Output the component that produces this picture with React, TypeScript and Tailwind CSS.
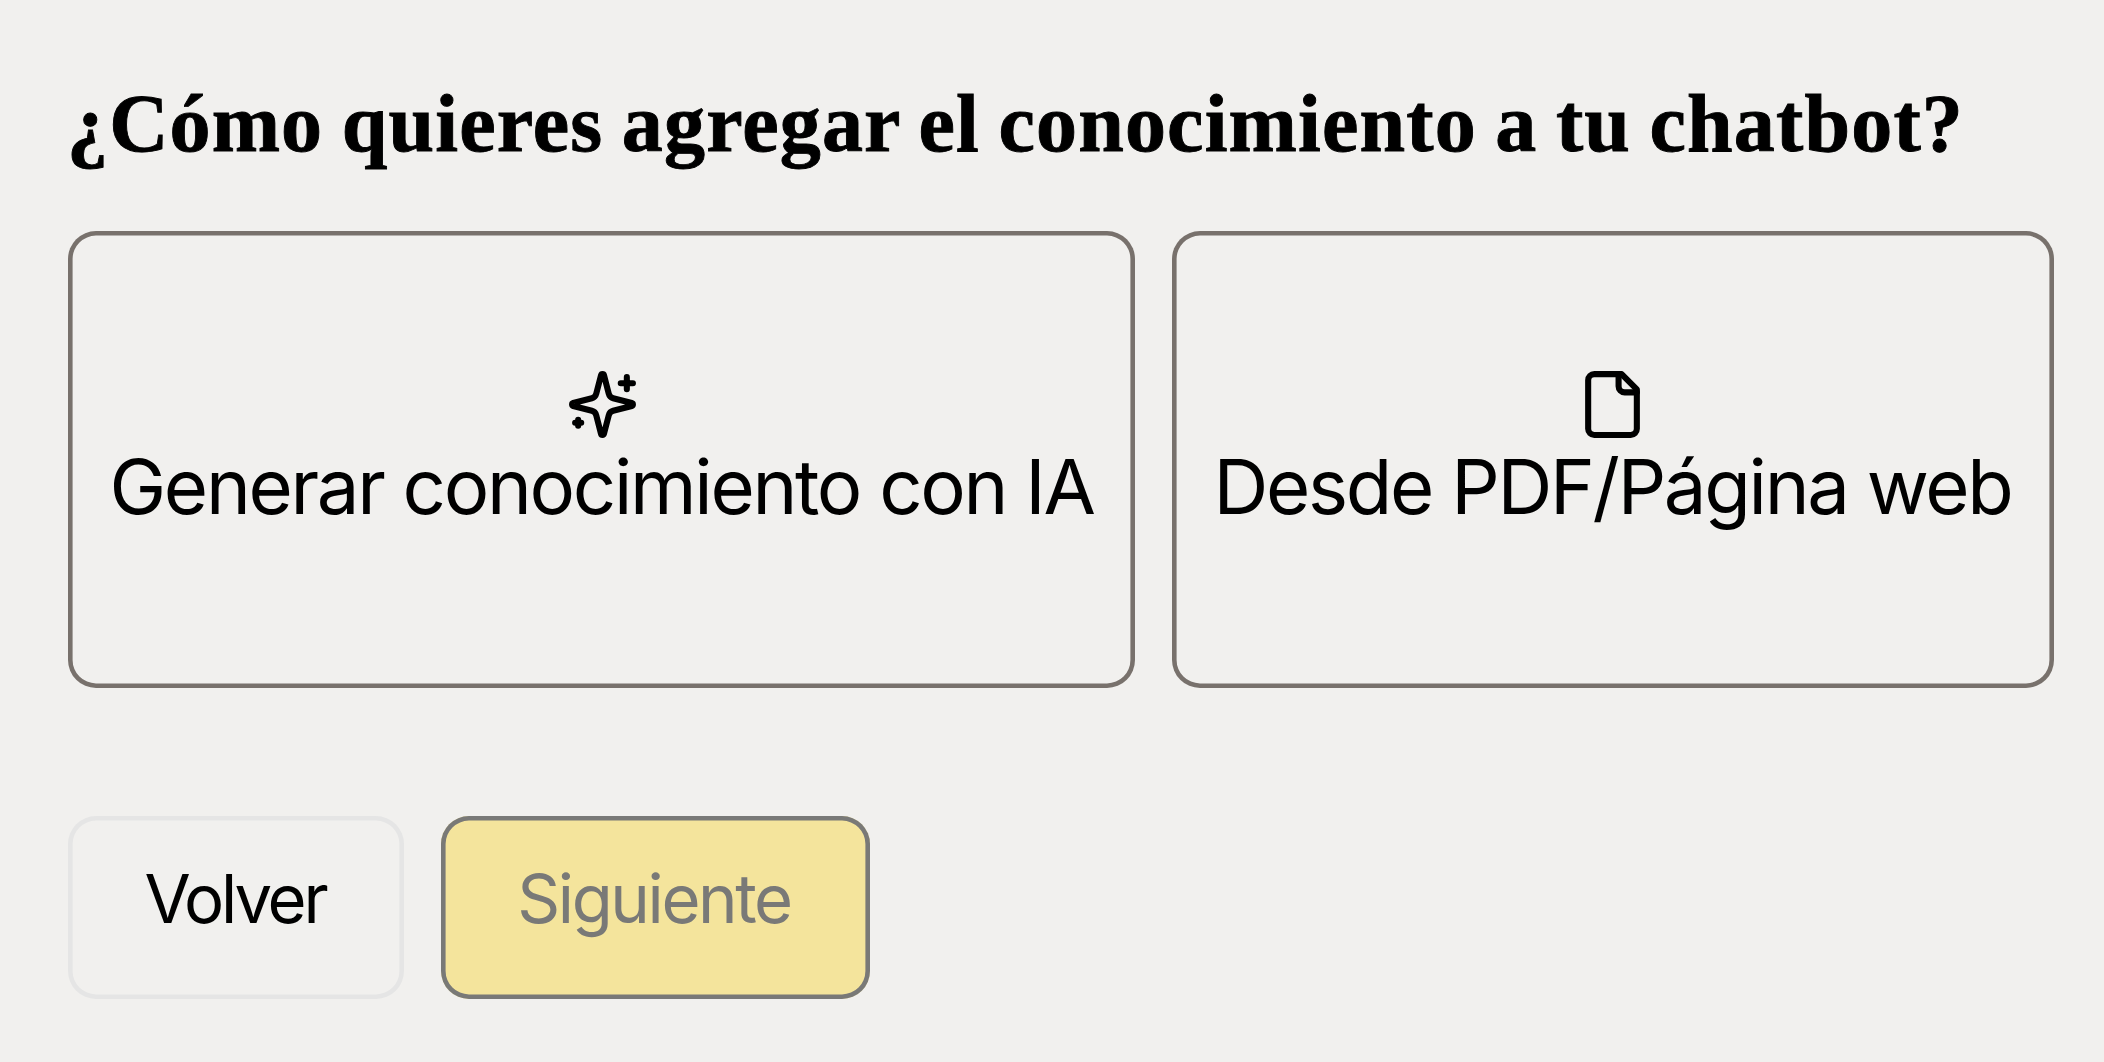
import React from "react";

function SparklesIcon() {
  return (
    <svg className="ml-[2px] size-[73px] shrink-0" viewBox="0 0 24 24" fill="none" stroke="currentColor" strokeWidth="2" strokeLinecap="round" strokeLinejoin="round">
      <path d="M9.937 15.5A2 2 0 0 0 8.5 14.063l-6.135-1.582a.5.5 0 0 1 0-.962L8.5 9.936A2 2 0 0 0 9.937 8.5l1.582-6.135a.5.5 0 0 1 .963 0L14.063 8.5A2 2 0 0 0 15.5 9.937l6.135 1.581a.5.5 0 0 1 0 .964L15.5 14.063a2 2 0 0 0-1.437 1.437l-1.582 6.135a.5.5 0 0 1-.963 0z" />
      <path d="M20 3v4M22 5h-4M4 17v2M5 18H3" />
    </svg>
  );
}

function FileIcon() {
  return (
    <svg className="mr-[2px] size-[73px] shrink-0" viewBox="0 0 24 24" fill="none" stroke="currentColor" strokeWidth="2" strokeLinecap="round" strokeLinejoin="round">
      <path d="M15 2H6a2 2 0 0 0-2 2v16a2 2 0 0 0 2 2h12a2 2 0 0 0 2-2V7Z" />
      <path d="M14 2v4a2 2 0 0 0 2 2h4" />
    </svg>
  );
}

export default function App() {
  return (
    <main className="h-[1062px] w-[2104px] overflow-hidden bg-[#f1f0ee] pl-[68px] pt-[76px] text-black">
      <h1 className="-ml-px h-[155px] whitespace-nowrap font-['Liberation_Serif',serif] text-[82px] font-bold leading-[96px] tracking-[1.15px] [word-spacing:-3.2px] [-webkit-text-stroke:0.9px_black]">
        ¿Cómo quieres agregar el conocimiento a tu chatbot?
      </h1>
      <div className="flex gap-[37px] whitespace-nowrap font-[Inter,sans-serif] text-[76px] leading-[90px] tracking-[-2.3px]">
        <button className="flex h-[457px] w-[1067px] flex-col items-center justify-start rounded-[28px] pt-[137px] shadow-[inset_0_0_0_4.6px_#78716c]">
          <SparklesIcon />
          <span>Generar conocimiento con IA</span>
        </button>
        <button className="flex h-[457px] w-[882px] flex-col items-center justify-start rounded-[28px] pt-[137px] shadow-[inset_0_0_0_4.6px_#78716c]">
          <FileIcon />
          <span className="mr-px">Desde PDF/Página web</span>
        </button>
      </div>
      <div className="mt-[127.5px] flex gap-[37px] font-[Inter,sans-serif] text-[67px] leading-[80px]">
        <button className="flex h-[183px] w-[336px] justify-center rounded-[28px] pr-[2px] pt-[43px] tracking-[-3.2px] shadow-[inset_0_0_0_4.6px_#e5e5e5]">Volver</button>
        <button disabled className="flex h-[183px] w-[429px] justify-center rounded-[28px] bg-[#f4e49c] pr-[3px] pt-[43px] tracking-[-2.4px] text-[#797977] shadow-[inset_0_0_0_4.6px_#797977]">Siguiente</button>
      </div>
    </main>
  );
}
